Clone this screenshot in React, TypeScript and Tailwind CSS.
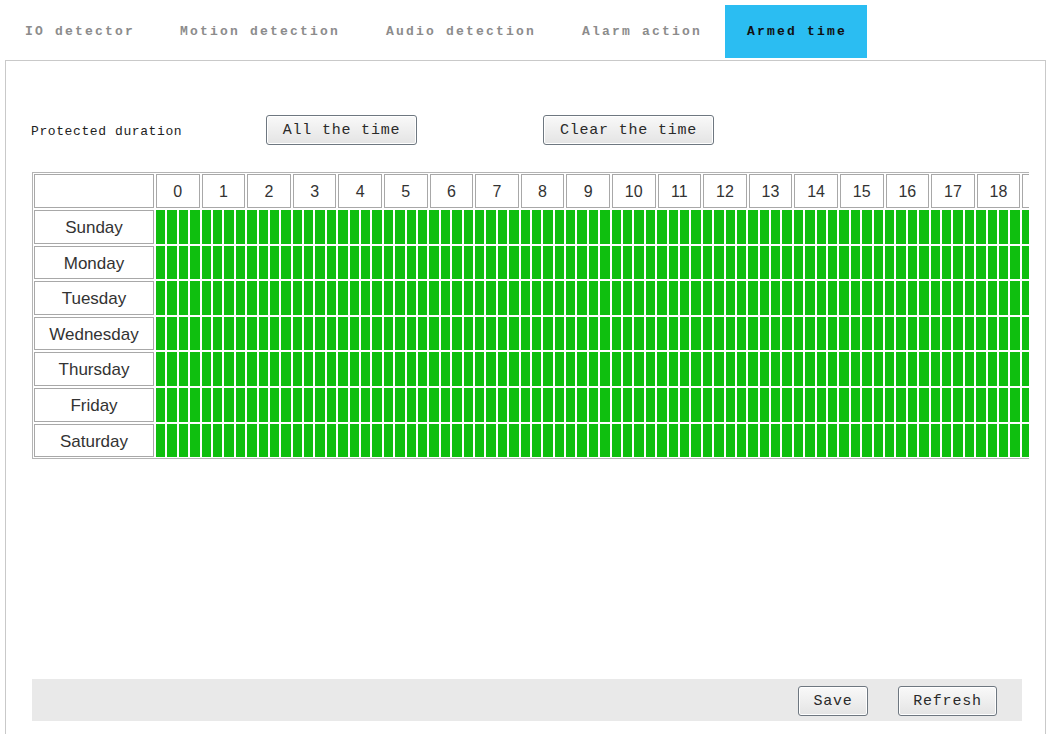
import React from "react";

const tabs = [
  { label: "IO detector", w: "w-[155px]" },
  { label: "Motion detection", w: "w-[206px]" },
  { label: "Audio detection", w: "w-[196px]" },
  { label: "Alarm action", w: "w-[165px]" },
  { label: "Armed time", w: "w-[142px]" },
];
const days = ["Sunday", "Monday", "Tuesday", "Wednesday", "Thursday", "Friday", "Saturday"];
const hours = Array.from({ length: 24 }, (_, i) => i);

function OldButton({ label, w }: { label: string; w: string }) {
  return (
    <button
      className={`${w} h-[30px] pt-[2px] rounded-[3px] border border-[#6e7780] bg-gradient-to-b from-[#f9f9f9] to-[#e4e4e4] text-[15px] tracking-[0.8px] text-[#2a2a2a] shadow-[inset_0_0_0_1px_#ffffff]`}
      style={{ fontFamily: '"Liberation Mono", monospace' }}
    >
      {label}
    </button>
  );
}

export default function App() {
  return (
    <div className="w-[1050px] h-[734px] overflow-hidden bg-white" style={{ fontFamily: '"Liberation Sans", Arial, sans-serif' }}>
      {/* Tabs */}
      <div className="flex pl-[3px] pt-[5px] mb-[2px]" style={{ fontFamily: '"Liberation Mono", monospace' }}>
        {tabs.map((t, i) => {
          const active = i === tabs.length - 1;
          return (
            <div
              key={t.label}
              className={`${t.w} h-[53px] pl-[22px] flex items-center text-[13px] font-bold tracking-[2.2px] whitespace-nowrap ${
                active ? "bg-[#2bbdf2] text-[#111]" : "text-[#8c8c8c]"
              }`}
            >
              {t.label}
            </div>
          );
        })}
      </div>

      {/* Panel */}
      <div className="ml-[5px] w-[1041px] h-[700px] border border-b-0 border-[#c9c9c9] flex flex-col">
        {/* Protected duration row */}
        <div className="mt-[54px] flex items-center pl-[25px] h-[30px]">
          <div
            className="w-[235px] pt-[3px] text-[13px] tracking-[0.6px] text-[#222]"
            style={{ fontFamily: '"Liberation Mono", monospace' }}
          >
            Protected duration
          </div>
          <OldButton label="All the time" w="w-[151px]" />
          <div className="w-[126px]" />
          <OldButton label="Clear the time" w="w-[171px]" />
        </div>

        {/* Table */}
        <div className="mt-[27px] ml-[26px] w-[997px] overflow-hidden">
          <div className="w-max border border-[#b4b4b4] p-[1px] flex flex-col gap-[2px]">
            {/* Header */}
            <div className="flex gap-[2px] h-[34px]">
              <div className="w-[120px] h-full border border-[#a8a8a8] bg-white" />
              {hours.map((h) => (
                <div
                  key={h}
                  className="w-[43.6px] h-full pt-[2px] border border-[#a8a8a8] bg-white flex items-center justify-center text-[16px] text-[#333]"
                >
                  {h <= 18 ? h : ""}
                </div>
              ))}
            </div>
            {days.map((d) => (
              <div key={d} className="flex gap-[2px] h-[33.6px]">
                <div className="w-[120px] h-full pt-[2px] border border-[#a8a8a8] bg-white flex items-center justify-center text-[17px] text-[#333]">
                  {d}
                </div>
                {hours.map((h) => (
                  <div key={h} className="flex gap-[2px] h-full">
                    <div className="w-[9.4px] h-full bg-[#0fbf0f]" />
                    <div className="w-[9.4px] h-full bg-[#0fbf0f]" />
                    <div className="w-[9.4px] h-full bg-[#0fbf0f]" />
                    <div className="w-[9.4px] h-full bg-[#0fbf0f]" />
                  </div>
                ))}
              </div>
            ))}
          </div>
        </div>

        {/* Footer bar */}
        <div className="mt-[220px] ml-[26px] w-[990px] h-[42px] bg-[#e9e9e9] flex items-center justify-end pr-[25px] gap-[30px] pt-[2px]">
          <OldButton label="Save" w="w-[70px]" />
          <OldButton label="Refresh" w="w-[99px]" />
        </div>
      </div>
    </div>
  );
}
